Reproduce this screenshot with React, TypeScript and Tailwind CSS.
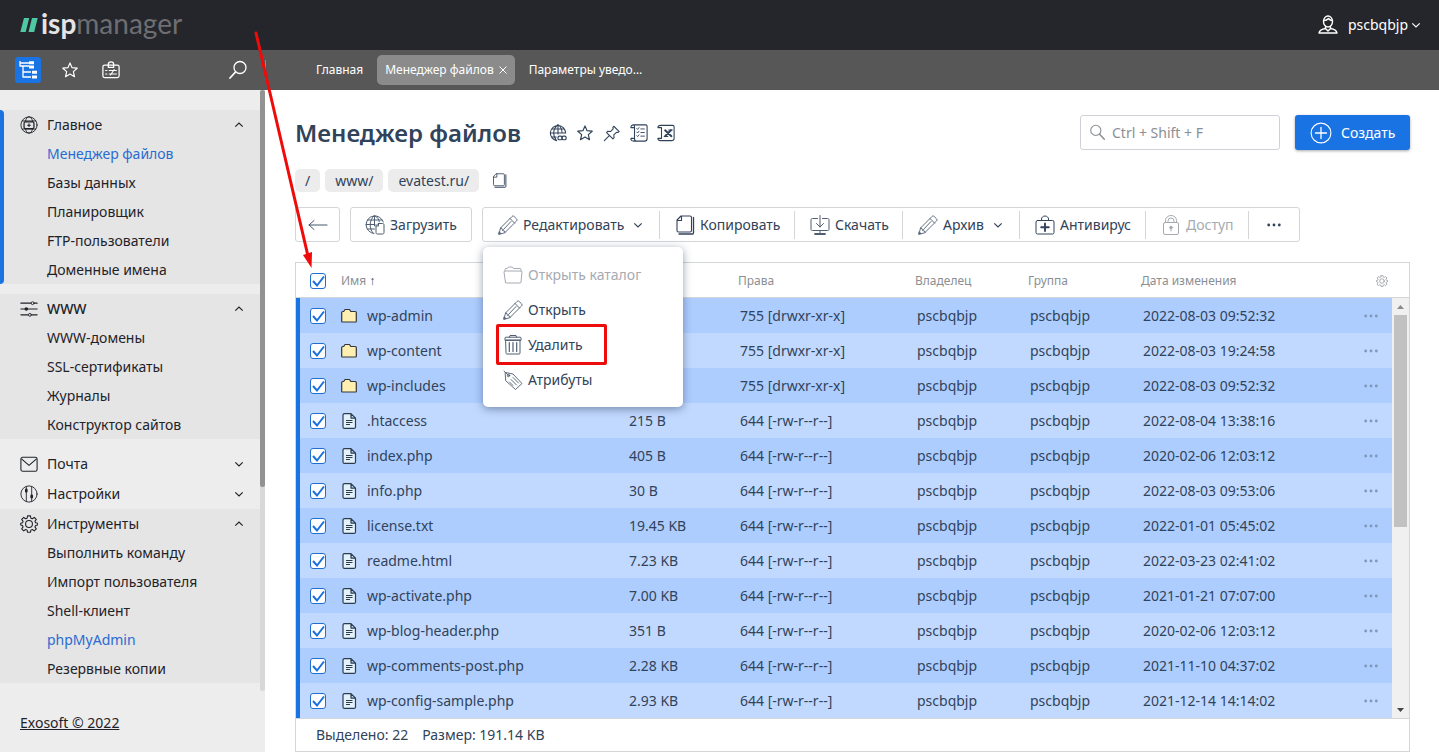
import { useState } from 'react';
import type { ReactNode } from 'react';

type IconProps = { size?: number; className?: string; children?: ReactNode };

const Icon = ({ size = 20, className = '', children }: IconProps) => (
  <svg
    width={size}
    height={size}
    viewBox="0 0 20 20"
    fill="none"
    stroke="currentColor"
    strokeWidth={1}
    strokeLinecap="round"
    strokeLinejoin="round"
    aria-hidden="true"
    className={`shrink-0 ${className}`}
  >
    {children}
  </svg>
);

// ── Icons ────────────────────────────────────────────────────────────────────
const ChevronDown = ({ className = '' }: { className?: string }) => (
  <svg width="10" height="10" viewBox="0 0 10 10" fill="none" stroke="currentColor" strokeWidth={1.2} aria-hidden="true" className={`shrink-0 ${className}`}>
    <path d="M1.300 3.300 5 7l3.700-3.700" />
  </svg>
);

const TreeIcon = () => (
  <Icon>
    <path d="M2 1v5h9M2 3h9M5 6v11h8M5 12h8" strokeWidth={1.3} strokeLinecap="butt" />
    <path d="M11 1.200h5v3h-5zM11 5.500h5v3h-5zM14 10.700h5v3h-5zM14 15.500h5v3h-5z" fill="currentColor" stroke="none" />
  </Icon>
);

const StarIcon = ({ size = 18 }: { size?: number }) => (
  <Icon size={size}>
    <path d="m10 2.200 2.300 5.200 5.700.6-4.300 3.800 1.300 5.700-5-3-5 3 1.300-5.700L2 8l5.700-.6z" strokeWidth={1.3} />
  </Icon>
);

const BadgeIcon = () => (
  <Icon size={18}>
    <rect x="1" y="4.500" width="18" height="14" rx="2" strokeWidth={1.400} />
    <path d="M7 7V4a3 3 0 0 1 6 0v3z" strokeWidth={1.400} />
    <path d="M4 10.500h1.500M8 10.500h8M4 14.500h1.500M8 14.500h8M13.500 9.500l-4 6" strokeWidth={1.200} />
  </Icon>
);

const LoupeIcon = ({ flip = false, size = 20 }: { flip?: boolean; size?: number }) => (
  <Icon size={size} className={flip ? '-scale-x-100' : ''}>
    <circle cx="8" cy="7.500" r="6" strokeWidth={1.300} />
    <path d="m12.500 12 5.500 6" strokeWidth={1.800} />
  </Icon>
);

const PanelGlobeIcon = () => (
  <Icon size={18}>
    <circle cx="10" cy="10" r="9" />
    <path d="M6 6C6.500 3 8 1 10 1s3.500 2 4 5M6 14c.5 3 2 5 4 5s3.500-2 4-5M2.500 5.500h15M2.500 14.500h15" />
    <rect x="4.500" y="6.500" width="11" height="7.500" rx="1.500" strokeWidth={1.400} />
    <path d="M10 8.700v3M8.500 10.200h3" strokeWidth={1.200} />
  </Icon>
);

const SlidersIcon = () => (
  <Icon size={18}>
    <path d="M1 3.500h11M16 3.500h3M1 10h18M1 16.500h8M13 16.500h6" strokeWidth={1.300} />
    <circle cx="14" cy="3.500" r="1.600" />
    <circle cx="7" cy="10" r="2" fill="currentColor" stroke="none" />
    <circle cx="11" cy="16.500" r="1.600" />
  </Icon>
);

const MailIcon = () => (
  <Icon size={18}>
    <rect x="1" y="2.500" width="18" height="15.500" rx="2" strokeWidth={1.200} />
    <path d="m2 4.500 8 7 8-7" strokeWidth={1.200} />
  </Icon>
);

const TuneIcon = () => (
  <Icon size={18}>
    <circle cx="10" cy="10" r="9" />
    <path d="M7 2v16M13 2v16" />
    <path d="M7 5.500v1.500M13 12v1.500" strokeWidth={3} />
  </Icon>
);

const GearIcon = ({ size = 18 }: { size?: number }) => (
  <Icon size={size}>
    <path
      d="M8.400 1h3.200l.5 2.500 1.600.7 2.200-1.500 2.200 2.200-1.500 2.200.7 1.600 2.400.5v1.800l-2.400.6-.7 1.600 1.500 2.200-2.200 2.200-2.200-1.500-1.600.7-.5 2.400H8.400l-.5-2.400-1.600-.7-2.200 1.500-2.200-2.200 1.500-2.200-.7-1.600L.8 11V9.200l2-.5.6-1.600-1.500-2.200 2.200-2.200 2.200 1.500 1.600-.7z"
      strokeWidth={1.200}
    />
    <circle cx="10" cy="10" r="3.800" strokeWidth={1.200} />
  </Icon>
);

const GlobeLinkIcon = () => (
  <Icon size={18}>
    <path d="M8.500 18.500A8.500 8.500 0 1 1 18.500 10M10 1v10M1.500 10H18M3 5.500h14M3 14.500h5M8 18C4 13 4 6 9.500 1M10.500 1c3 2.500 4 5.500 4 9" strokeWidth={1.200} />
    <rect x="10" y="13.500" width="4.500" height="4" rx="1.500" strokeWidth={1.300} />
    <rect x="14.500" y="13.500" width="4.500" height="4" rx="1.500" strokeWidth={1.300} />
  </Icon>
);

const PinIcon = () => (
  <Icon size={18}>
    <path d="m12 2.500 6 6-1.500 1-1.500-.3-3 3 .3 3-1.300 1.300-7-7L5.300 8l3 .4 3-3-.3-1.600zM7 13l-5.500 5.500" strokeWidth={1.200} />
  </Icon>
);

const ScrollListIcon = () => (
  <Icon size={18}>
    <path d="M5 16V4H1c0-2 1-3 3-3h13.500c1 0 1.500.5 1.500 1.500V16c0 2-1 3-3 3H4c-2 0-3-1-3-3h4c0 2 0 3 2 3M4 1c1 0 1 1 1 3" strokeWidth={1.200} />
    <path d="m7.500 5 1 1 1.500-2M7.500 9l1 1L10 8M7.500 13l1 1 1.500-2M12 5.500h4M12 9.500h4M12 13.500h4" />
  </Icon>
);

const ScrollExcelIcon = () => (
  <Icon size={18}>
    <path d="M5 16V4H1c0-1.500 1-2.500 3-2.500h13.500c1 0 1.500.5 1.500 1.500v13c0 1.500-1 2.500-3 2.500H4c-2 0-3-1-3-2.500h4" strokeWidth={1.200} />
    <path d="m9 7 7 6.500M15.500 7 9 13.500" strokeWidth={2.200} />
    <path d="M8 13.800h4M13 6.700h4" strokeWidth={1.200} />
  </Icon>
);

const PagesIcon = ({ size = 20 }: { size?: number }) => (
  <Icon size={size}>
    <path d="M6 1h9c1 0 1.500.5 1.500 1.500v13c0 1-.5 1.500-1.500 1.500H3.500C2.500 17 2 16.500 2 15.500V5zM6.500 1v4.500H2" strokeWidth={1.100} />
    <path d="M18.500 2.500V18c0 .6-.3 1-1 1H4" strokeWidth={1.300} />
  </Icon>
);

const BackIcon = () => (
  <Icon>
    <path d="M19 10H1M6 5.500 1 10l5 4.500" strokeWidth={0.900} />
  </Icon>
);

const UploadIcon = () => (
  <Icon className="opacity-85">
    <path d="M9 18.500A8.800 8.800 0 1 1 18.300 7M9.500.800v10M1 9.500h9M2.500 5h14.500M2.500 14h7M8 18C4 13 4 6 9 .800M10 .800c3 1.700 4 4 4.300 6" />
    <path d="M13.500 8.500h4c1 0 1.500.5 1.500 1.500v7.500c0 1-.5 1.500-1.500 1.500h-5c-1 0-1.500-.5-1.500-1.500V11zM13.500 8.500V11H11" />
  </Icon>
);

const PencilIcon = () => (
  <Icon className="opacity-85">
    <path d="m1 19 1.500-6L14 1.500c.7-.7 1.500-.7 2.200 0l2.300 2.300c.7.7.7 1.500 0 2.200L7 17.500zM2.500 13 4 13.500l.5 2 2 .5.500 1.500M12 3.500l4.500 4.500M13 6.500l-7.500 8M1 19l2-.5L1.500 17z" strokeWidth={0.900} />
  </Icon>
);

const MonitorDownIcon = () => (
  <Icon className="opacity-85">
    <path d="M7.500 3.500h-5c-1 0-1.500.5-1.500 1.500v9.500c0 .7.500 1 1.500 1h15c1 0 1.500-.3 1.500-1V5c0-1-.5-1.500-1.500-1.500h-5M10 .500V12M6.500 8.500 10 12l3.500-3.500M10 15.500v3" />
    <path d="M5 19h10" strokeWidth={1.800} />
  </Icon>
);

const MedkitIcon = () => (
  <Icon>
    <rect x="1" y="5.500" width="18" height="13.500" rx="1.500" />
    <path d="M6.500 5.500V4C6.500 2.500 8 1 10 1s3.500 1.500 3.500 3v1.500" />
    <path d="M10 8.500v7.500M6.200 12.200h7.600" strokeWidth={1.900} />
  </Icon>
);

const LockIcon = () => (
  <Icon>
    <rect x="2.500" y="7.500" width="15" height="12" rx="1.500" />
    <path d="M4.500 7.500V5.500a5.500 5 0 0 1 11 0v2M7 7.500V6a3 3 0 0 1 6 0v1.500M10 13v3" />
    <circle cx="10" cy="12.500" r="1.300" fill="currentColor" />
  </Icon>
);

const FolderOutlineIcon = () => (
  <Icon>
    <path d="M2.500 17.500 1 7c0-.8.500-1 1-1h16c.7 0 1 .3 1 1l-1 10c0 .7-.5 1-1 1H3.500c-.5 0-.9 0-1-.5zM2 6V4.500c0-.5.300-1 1-1h1.500l1-1.500h4l1 1.500H17c.6 0 1 .3 1 1V6" />
  </Icon>
);

const TrashIcon = () => (
  <Icon className="opacity-85">
    <path d="M3 5h14v13c0 .7-.3 1-1 1H4c-.7 0-1-.3-1-1zM2 5V3c0-.5.300-.8 1-.8h14c.6 0 1 .3 1 .8v2zM6.500 2.200 7 .500h6l.500 1.700" />
    <path d="M6.300 7.500v9M10 7.500v9M13.700 7.500v9" strokeWidth={1.200} />
  </Icon>
);

const TagIcon = () => (
  <Icon className="opacity-85">
    <path d="M2.500 2.500 10 4l9 9.500-6.500 6L3 11zM1 1l4.500 4.500M10 7.500l5.500 5.500M8 9.500l5.500 5.500M6.500 12l3.500 3.500" strokeWidth={0.900} />
    <circle cx="5.500" cy="5.500" r="1.200" />
  </Icon>
);

const UserIcon = () => (
  <Icon>
    <ellipse cx="10" cy="6.500" rx="4.500" ry="5.500" strokeWidth={1.400} />
    <path d="M6 5.500c2 0 3.500-.8 4.500-2 1 1.500 2 2 4 2M7.500 11.500v2C4 14 1.500 15.500 1 18h18c-.5-2.500-3-4-6.500-4.500v-2M7.500 13.500 10 16l2.500-2.500" strokeWidth={1.400} />
  </Icon>
);

const FolderIcon = () => (
  <svg width="16" height="16" viewBox="0 0 16 16" aria-hidden="true" className="shrink-0">
    <path d="M.7 13.500V4.500c0-.6.400-1 1-1h1l1.300-2h4.500l1.300 2h4.500c.6 0 1 .4 1 1v9c0 .3-.2.500-.5.500H1.200c-.3 0-.5-.2-.5-.5z" fill="#ffefb0" stroke="#33363c" strokeWidth="1.200" strokeLinejoin="round" />
  </svg>
);

const FileIcon = () => (
  <svg width="16" height="16" viewBox="0 0 16 16" fill="none" stroke="#2b3d4c" aria-hidden="true" className="shrink-0">
    <path d="M3.500.600h6.500l4.500 4.500v8.800c0 1-.5 1.500-1.500 1.500H3.500c-1 0-1.500-.5-1.500-1.500V2.100C2 1.100 2.500.600 3.500.600zM10 .600v4.500h4.500" fill="#e3f1fb" strokeWidth="1.200" strokeLinejoin="round" />
    <path d="M5 7.500h6.500M5 9.500h6.500M5 11.500h4" strokeWidth="1.200" />
  </svg>
);

const Dots = () => (
  <svg width="14" height="4" viewBox="0 0 14 4" fill="currentColor" aria-hidden="true" className="shrink-0">
    <circle cx="1.700" cy="2" r="1.400" />
    <circle cx="7" cy="2" r="1.400" />
    <circle cx="12.300" cy="2" r="1.400" />
  </svg>
);

// ── Data ─────────────────────────────────────────────────────────────────────
type Section = { title: string; icon: ReactNode; items?: string[]; active?: boolean; bold?: string; gap?: boolean };

const SECTIONS: Section[] = [
  {
    title: 'Главное',
    icon: <PanelGlobeIcon />,
    items: ['Менеджер файлов', 'Базы данных', 'Планировщик', 'FTP-пользователи', 'Доменные имена'],
    active: true,
    gap: true,
  },
  {
    title: 'WWW',
    icon: <SlidersIcon />,
    items: ['WWW-домены', 'SSL-сертификаты', 'Журналы', 'Конструктор сайтов'],
    bold: 'font-medium',
    gap: true,
  },
  { title: 'Почта', icon: <MailIcon /> },
  { title: 'Настройки', icon: <TuneIcon /> },
  {
    title: 'Инструменты',
    icon: <GearIcon />,
    items: ['Выполнить команду', 'Импорт пользователя', 'Shell-клиент', 'phpMyAdmin', 'Резервные копии'],
  },
];

const HIGHLIGHTED = ['Менеджер файлов', 'phpMyAdmin'];

type FileRow = { name: string; size?: string; date: string };

const FILES: FileRow[] = [
  { name: 'wp-admin', date: '2022-08-03 09:52:32' },
  { name: 'wp-content', date: '2022-08-03 19:24:58' },
  { name: 'wp-includes', date: '2022-08-03 09:52:32' },
  { name: '.htaccess', size: '215 B', date: '2022-08-04 13:38:16' },
  { name: 'index.php', size: '405 B', date: '2020-02-06 12:03:12' },
  { name: 'info.php', size: '30 B', date: '2022-08-03 09:53:06' },
  { name: 'license.txt', size: '19.45 KB', date: '2022-01-01 05:45:02' },
  { name: 'readme.html', size: '7.23 KB', date: '2022-03-23 02:41:02' },
  { name: 'wp-activate.php', size: '7.00 KB', date: '2021-01-21 07:07:00' },
  { name: 'wp-blog-header.php', size: '351 B', date: '2020-02-06 12:03:12' },
  { name: 'wp-comments-post.php', size: '2.28 KB', date: '2021-11-10 04:37:02' },
  { name: 'wp-config-sample.php', size: '2.93 KB', date: '2021-12-14 14:14:02' },
];

// ── Parts ────────────────────────────────────────────────────────────────────
const Checkbox = ({ label, checked, onChange }: { label: string; checked: boolean; onChange: () => void }) => (
  <span className="relative block h-4 w-4">
    <input
      type="checkbox"
      aria-label={label}
      checked={checked}
      onChange={onChange}
      className="peer block h-4 w-4 appearance-none rounded-[3px] border border-[#1f6fd0] bg-white"
    />
    <svg viewBox="0 0 16 16" fill="none" stroke="#1a70dd" strokeWidth={2} aria-hidden="true" className="pointer-events-none absolute inset-0 hidden h-4 w-4 peer-checked:block">
      <path d="m3 8 4 4.500L14 3.500" />
    </svg>
  </span>
);

const TopBar = () => (
  <header className="flex h-[50px] items-center justify-between bg-[#25262b] pl-5 pr-[18px]">
    <a href="#" className="flex items-center gap-[3px] font-['Lato',sans-serif] text-[28px] leading-8">
      <svg width="18" height="16" viewBox="0 0 18 16" fill="#4fc9a4" aria-hidden="true">
        <path d="M4 1H9.200L5.700 15H.3zM12 1H17.700L14.200 15H8.500z" />
      </svg>
      <span className="pb-1 text-[#6d6e72]"><span className="font-bold text-[#e4e4e6]">isp</span>manager</span>
    </a>
    <button type="button" className="flex items-center text-sm text-white">
      <UserIcon />
      <span className="ml-2.5">pscbqbjp</span>
      <ChevronDown className="ml-[3px]" />
    </button>
  </header>
);

const TabBar = () => (
  <div className="flex h-10 items-center bg-[#575757] text-white">
    <div className="flex w-[265px] shrink-0 items-center pl-[15px] pr-[17px]">
      <button type="button" aria-label="Меню" className="flex h-[26px] w-[26px] items-center justify-center rounded-[3px] bg-[#1a73e3]">
        <TreeIcon />
      </button>
      <button type="button" aria-label="Избранное" className="ml-5"><StarIcon /></button>
      <button type="button" aria-label="Задачи" className="ml-[23px]"><BadgeIcon /></button>
      <button type="button" aria-label="Поиск" className="ml-auto"><LoupeIcon flip /></button>
    </div>
    <span className="h-5 w-px bg-[#8b8b8b]" />
    <nav className="flex items-center pl-9 text-xs">
      <a href="#" className="px-3.5">Главная</a>
      <div className="flex h-[30px] items-center gap-[5px] rounded-[5px] bg-[#8b8b8b] px-2">
        <a href="#">Менеджер файлов</a>
        <button type="button" aria-label="Закрыть вкладку">
          <svg width="8" height="8" viewBox="0 0 8 8" stroke="currentColor" aria-hidden="true">
            <path d="m.5.5 7 7M7.500.5l-7 7" />
          </svg>
        </button>
      </div>
      <a href="#" className="px-3.5">Параметры уведо…</a>
    </nav>
  </div>
);

const Sidebar = () => (
  <aside className="w-[265px] shrink-0 bg-[#ededed] text-sm text-[#1f2329]">
    <div className="flex">
      <nav className="min-w-0 flex-1 pb-2 pt-5">
        {SECTIONS.map((s) => (
          <div
            key={s.title}
            className={`relative ${s.items ? 'bg-[#e5e5e5]' : ''} ${s.gap ? 'mb-2.5' : ''}`}
          >
            {s.active && <span className="absolute inset-y-0 left-0 w-1 rounded-r bg-[#1a73e3]" />}
            <button
              type="button"
              className={`flex w-full items-center pl-5 pr-4 ${s.items ? 'h-[29px]' : 'h-[30px]'} ${s.bold ?? ''}`}
            >
              {s.icon}
              <span className="ml-[9px]">{s.title}</span>
              <ChevronDown className={s.items ? 'ml-auto rotate-180' : 'ml-auto'} />
            </button>
            {s.items && (
              <ul>
                {s.items.map((item) => (
                  <li key={item}>
                    <a href="#" className={`flex h-[29px] items-center pl-[47px] ${HIGHLIGHTED.includes(item) ? 'text-[#2a6cd0]' : ''}`}>
                      {item}
                    </a>
                  </li>
                ))}
              </ul>
            )}
          </div>
        ))}
      </nav>
      {/* Scrollbar */}
      <div className="w-[5px] rounded-b bg-[#d8d8d8]">
        <div className="h-[66%] rounded bg-[#929292]" />
      </div>
    </div>
    <p className="mt-[22px] px-5"><a href="#" className="underline">Exosoft © 2022</a></p>
  </aside>
);

const EditMenu = () => (
  <ul className="absolute left-0 top-[39px] z-20 w-[200px] rounded-[5px] bg-white py-2.5 text-sm shadow-[0_2px_8px_rgba(40,60,90,0.5)]">
    <li>
      <button type="button" disabled className="flex h-[35px] w-full items-center gap-[5px] pl-5 text-[#a6abb2]">
        <FolderOutlineIcon />Открыть каталог
      </button>
    </li>
    <li>
      <button type="button" className="flex h-[35px] w-full items-center gap-[5px] pl-5">
        <PencilIcon />Открыть
      </button>
    </li>
    <li className="relative">
      <button type="button" className="flex h-[35px] w-full items-center gap-[5px] pl-5">
        <TrashIcon />Удалить
      </button>
      <span className="pointer-events-none absolute -inset-y-[3px] left-[13px] w-[111px] rounded-[2px] border-3 border-[#ec0c0c]" />
    </li>
    <li>
      <button type="button" className="flex h-[35px] w-full items-center gap-[5px] pl-5">
        <TagIcon />Атрибуты
      </button>
    </li>
  </ul>
);

const Separator = () => <span className="h-7 w-px shrink-0 bg-[#d3d6d9]" />;

const Toolbar = () => (
  <div className="mt-[15px] flex h-[35px] text-sm">
    <button type="button" aria-label="Назад" className="flex w-[45px] items-center justify-center rounded-[3px] border border-[#d3d6d9]">
      <BackIcon />
    </button>
    <button type="button" className="ml-2.5 flex w-[122px] items-center justify-center gap-[5px] rounded-[3px] border border-[#d3d6d9]">
      <UploadIcon />Загрузить
    </button>
    <div className="relative ml-2.5 flex items-center rounded-[3px] border border-[#d3d6d9]">
      <button type="button" className="flex w-44 items-center gap-[5px] pl-[15px]">
        <PencilIcon />Редактировать<ChevronDown className="ml-auto mr-4" />
      </button>
      <Separator />
      <button type="button" className="flex w-[134px] items-center gap-[5px] pl-[15px]">
        <PagesIcon />Копировать
      </button>
      <Separator />
      <button type="button" className="flex w-[107px] items-center gap-[5px] pl-[15px]">
        <MonitorDownIcon />Скачать
      </button>
      <Separator />
      <button type="button" className="flex w-[116px] items-center gap-[5px] pl-[15px]">
        <PencilIcon />Архив<ChevronDown className="ml-auto mr-4" />
      </button>
      <Separator />
      <button type="button" className="flex w-[125px] items-center gap-[5px] pl-[15px]">
        <MedkitIcon />Антивирус
      </button>
      <Separator />
      <button type="button" disabled className="flex w-[102px] items-center gap-[5px] pl-[15px] text-[#a6abb2]">
        <LockIcon />Доступ
      </button>
      <Separator />
      <button type="button" aria-label="Ещё" className="flex h-full w-[50px] items-center justify-center"><Dots /></button>
      <EditMenu />
    </div>
  </div>
);

const FileTable = () => {
  const [selected, setSelected] = useState<string[]>(FILES.map((f) => f.name));
  const all = selected.length === FILES.length;

  const toggle = (name: string) =>
    setSelected((prev) => (prev.includes(name) ? prev.filter((n) => n !== name) : [...prev, name]));

  return (
    <section className="mt-5 border border-[#d3d6d9]">
      <div className="flex">
        <table className="min-w-0 flex-1 table-fixed text-left text-sm">
          <colgroup>
            <col className="w-[35px]" />
            <col />
            <col className="w-[111px]" />
            <col className="w-[177px]" />
            <col className="w-[113px]" />
            <col className="w-[113px]" />
            <col className="w-[221px]" />
            <col className="w-10" />
          </colgroup>
          <thead className="text-xs text-[#8b8f95]">
            <tr className="h-[35px] shadow-[inset_0_-1px_0_#d3d6d9]">
              <th className="pl-3.5">
                <Checkbox label="Выбрать все" checked={all} onChange={() => setSelected(all ? [] : FILES.map((f) => f.name))} />
              </th>
              <th className="pl-2.5 font-normal">Имя <span className="text-[#31435a]">↑</span></th>
              <th aria-label="Размер" />
              <th className="pl-2.5 font-normal">Права</th>
              <th className="pl-2.5 font-normal">Владелец</th>
              <th className="pl-2.5 font-normal">Группа</th>
              <th className="pl-2.5 font-normal">Дата изменения</th>
              <th className="pr-1">
                <button type="button" aria-label="Настройка таблицы" className="ml-auto block"><GearIcon size={12} /></button>
              </th>
            </tr>
          </thead>
          <tbody>
            {FILES.map((f) => {
              const on = selected.includes(f.name);
              return (
                <tr
                  key={f.name}
                  className={`h-[35px] ${on ? 'shadow-[inset_4px_0_0_#1a73e3] odd:bg-[#adcdff] even:bg-[#c2d9ff]' : ''}`}
                >
                  <td className="pl-3.5">
                    <Checkbox label={f.name} checked={on} onChange={() => toggle(f.name)} />
                  </td>
                  <td className="pl-2.5">
                    <span className="flex items-center gap-2.5">
                      {f.size ? <FileIcon /> : <FolderIcon />}
                      {f.name}
                    </span>
                  </td>
                  <td className="pl-3">{f.size}</td>
                  <td className="pl-3">{f.size ? '644 [-rw-r--r--]' : '755 [drwxr-xr-x]'}</td>
                  <td className="pl-3">pscbqbjp</td>
                  <td className="pl-3">pscbqbjp</td>
                  <td className="pl-3">{f.date}</td>
                  <td className="pr-3.5 text-[#7f97b8]">
                    <button type="button" aria-label={`Действия: ${f.name}`} className="ml-auto block"><Dots /></button>
                  </td>
                </tr>
              );
            })}
          </tbody>
        </table>
        {/* Table scrollbar */}
        <div className="flex w-[17px] shrink-0 flex-col">
          <div className="h-[35px] border-b border-[#d3d6d9]" />
          <div className="flex flex-1 flex-col items-center bg-[#f0f0f0] px-0.5">
            <svg width="9" height="17" viewBox="0 0 9 17" fill="#8a8a8a" aria-hidden="true"><path d="M1 11 4.500 7 8 11z" /></svg>
            <div className="h-[212px] w-full bg-[#c1c1c1]" />
            <svg width="9" height="17" viewBox="0 0 9 17" fill="#444" aria-hidden="true" className="mt-auto"><path d="m1 7 3.500 4L8 7z" /></svg>
          </div>
        </div>
      </div>
      <footer className="flex h-[33px] items-center gap-3.5 border-t border-[#d3d6d9] px-5 text-sm">
        <span>Выделено: 22</span>
        <span>Размер: 191.14 KB</span>
      </footer>
    </section>
  );
};

const App = () => (
  <div className="relative flex min-h-screen flex-col overflow-hidden bg-white font-['Noto_Sans',sans-serif] text-[#31435a]">
    <TopBar />
    <TabBar />
    <div className="flex flex-1">
      <Sidebar />
      <main className="min-w-0 flex-1 pl-[30px] pr-[29px] pt-[25px]">
        <div className="flex h-[35px] items-center">
          <h1 className="text-2xl font-semibold">Менеджер файлов</h1>
          <div className="ml-7 flex gap-[9px]">
            <button type="button" aria-label="Открыть сайт"><GlobeLinkIcon /></button>
            <button type="button" aria-label="В избранное"><StarIcon /></button>
            <button type="button" aria-label="Закрепить"><PinIcon /></button>
            <button type="button" aria-label="Журнал"><ScrollListIcon /></button>
            <button type="button" aria-label="Экспорт в Excel"><ScrollExcelIcon /></button>
          </div>
          <label className="ml-auto flex h-[35px] w-[200px] items-center gap-1.5 rounded-[3px] border border-[#cfd3d8] px-2 text-[#8b8f95]">
            <LoupeIcon size={17} />
            <input type="text" aria-label="Поиск" placeholder="Ctrl + Shift + F" className="min-w-0 flex-1 text-sm outline-none placeholder:text-[#8b8f95]" />
          </label>
          <button type="button" className="ml-[15px] flex h-[35px] w-[115px] items-center gap-[9px] rounded-[3px] bg-[#1a73e3] pl-[15px] text-sm text-white shadow-[0_1px_3px_rgba(0,0,0,0.35)]">
            <Icon size={22}>
              <circle cx="10" cy="10" r="9" />
              <path d="M10 5v10M5 10h10" strokeWidth={1.200} />
            </Icon>
            Создать
          </button>
        </div>

        <div className="mt-[19px] flex h-[23px] items-center gap-[5px] text-sm">
          <a href="#" className="rounded-[5px] bg-[#ececec] px-2.5 leading-[23px]">/</a>
          <a href="#" className="rounded-[5px] bg-[#ececec] px-2.5 leading-[23px]">www/</a>
          <a href="#" className="rounded-[5px] bg-[#ececec] px-2.5 leading-[23px]">evatest.ru/</a>
          <button type="button" aria-label="Копировать путь" className="ml-2"><PagesIcon size={15} /></button>
        </div>

        <Toolbar />
        <FileTable />
      </main>
    </div>

    {/* Arrow pointing at the select-all checkbox */}
    <svg width="80" height="250" viewBox="0 0 80 250" aria-hidden="true" className="pointer-events-none absolute left-[245px] top-5 z-30">
      <path d="M11 13 63 236" stroke="#f00b0b" strokeWidth="3" strokeLinecap="round" fill="none" />
      <path d="m58 235 9-3-.5 16z" fill="#f00b0b" />
    </svg>
  </div>
);

export default App;
